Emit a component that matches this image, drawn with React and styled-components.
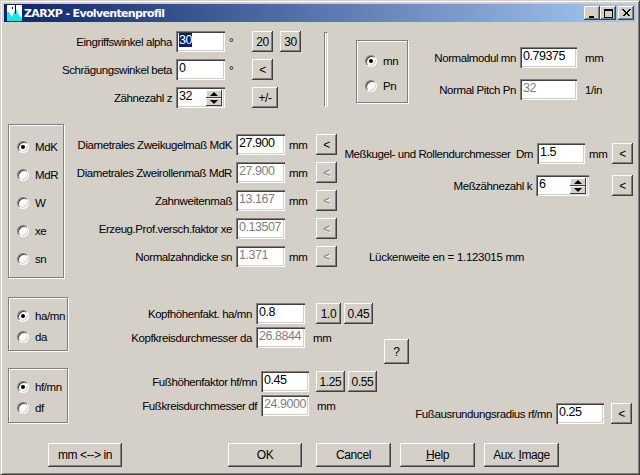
import styled, { createGlobalStyle } from "styled-components";

const GlobalStyle = createGlobalStyle`
  html, body {
    margin: 0;
    padding: 0;
    background: #d4d0c8;
  }
  body {
    font-family: "Liberation Sans", Arial, sans-serif;
    font-size: 11.5px;
    letter-spacing: -0.42px;
    color: #000;
  }
`;

const Frame = styled.div`
  box-sizing: border-box;
  width: 640px;
  height: 475px;
  padding: 3px;
  background: #d4d0c8;
  border: 1px solid;
  border-color: #d4d0c8 #404040 #404040 #d4d0c8;
  box-shadow: inset 1px 1px 0 #fff, inset -1px -1px 0 #808080;
  overflow: hidden;
`;

const TitleBar = styled.div`
  display: flex;
  align-items: center;
  height: 18px;
  padding: 0 2px;
  background: linear-gradient(to right, #0a246a, #a6caf0);
`;

const TitleText = styled.div`
  flex: 1;
  margin-left: 2px;
  color: #fff;
  font-family: "DejaVu Sans", sans-serif;
  font-size: 11px;
  font-weight: bold;
  letter-spacing: -0.65px;
  white-space: nowrap;
`;

const CaptionButton = styled.div`
  display: flex;
  align-items: center;
  justify-content: center;
  width: 16px;
  height: 14px;
  margin-left: ${(p) => p.$gap || 0}px;
  background: #d4d0c8;
  box-shadow: inset -1px -1px 0 #404040, inset 1px 1px 0 #fff, inset -2px -2px 0 #808080;
`;

const Client = styled.div`
  display: flex;
  flex-direction: column;
`;

const Section = styled.div`
  display: flex;
  margin-top: ${(p) => p.$top}px;
`;

const Rows = styled.div`
  display: flex;
  flex-direction: column;
  gap: ${(p) => p.$gap}px;
  width: ${(p) => (p.$width ? `${p.$width}px` : "auto")};
  margin-top: ${(p) => p.$top || 0}px;
`;

const Row = styled.div`
  display: flex;
  align-items: center;
  height: 21px;
`;

const Label = styled.div`
  flex: none;
  width: ${(p) => p.$width}px;
  margin-right: 4px;
  text-align: right;
  white-space: pre;
`;

const Unit = styled.div`
  flex: none;
  width: ${(p) => p.$width}px;
  padding-left: ${(p) => p.$left || 4}px;
  box-sizing: border-box;
  white-space: nowrap;
`;

const Field = styled.div`
  flex: none;
  box-sizing: border-box;
  position: relative;
  width: ${(p) => p.$width || 49}px;
  height: 21px;
  padding: 2px 3px;
  line-height: 15px;
  font-size: 12.5px;
  letter-spacing: -0.45px;
  background: #fff;
  color: ${(p) => (p.$off ? "#808080" : "#000")};
  box-shadow: inset 1px 1px 0 #808080, inset 2px 2px 0 #404040, inset -1px -1px 0 #fff, inset -2px -2px 0 #d4d0c8;
`;

const Selected = styled.span`
  background: #0a246a;
  color: #fff;
`;

const Spin = styled.div`
  position: absolute;
  top: 3px;
  right: 3px;
  display: flex;
  flex-direction: column;
  width: 16px;
  height: 16px;
`;

const SpinPart = styled.div`
  display: flex;
  align-items: center;
  justify-content: center;
  height: 8px;
  background: #d4d0c8;
  box-shadow: inset -1px -1px 0 #404040, inset 1px 1px 0 #fff;

  &::after {
    content: "";
    border-left: 4px solid transparent;
    border-right: 4px solid transparent;
    ${(p) => (p.$down ? "border-top: 4px solid #000;" : "border-bottom: 4px solid #000;")}
  }
`;

const Button = styled.div`
  flex: none;
  box-sizing: border-box;
  display: flex;
  align-items: center;
  justify-content: center;
  width: ${(p) => p.$width || 21}px;
  height: ${(p) => p.$height || 21}px;
  margin-left: ${(p) => p.$left || 0}px;
  margin-top: ${(p) => p.$top || 0}px;
  background: #d4d0c8;
  font-size: 12px;
  letter-spacing: -0.4px;
  color: ${(p) => (p.$off ? "#808080" : "#000")};
  text-shadow: ${(p) => (p.$off ? "1px 1px 0 #fff" : "none")};
  box-shadow: inset -1px -1px 0 #404040, inset 1px 1px 0 #fff, inset -2px -2px 0 #808080;
  white-space: pre;
`;

const Etched = styled.div`
  flex: none;
  box-sizing: border-box;
  width: 4px;
  height: 75px;
  margin-top: 1px;
  border: 1px solid #808080;
  border-right-color: #fff;
  border-bottom-color: #fff;
  box-shadow: inset 1px 0 0 #fff;
`;

const Group = styled.div`
  flex: none;
  box-sizing: border-box;
  display: flex;
  flex-direction: column;
  justify-content: center;
  gap: ${(p) => p.$gap}px;
  width: ${(p) => p.$width}px;
  height: ${(p) => p.$height}px;
  margin-left: ${(p) => p.$left || 4}px;
  margin-top: ${(p) => p.$top || 0}px;
  padding: 4px 0 0 8px;
  border: 1px solid #808080;
  box-shadow: 1px 1px 0 #fff, inset 1px 1px 0 #fff;
`;

const RadioRow = styled.div`
  display: flex;
  align-items: center;
  gap: 6px;
  height: 14px;
  white-space: nowrap;
`;

const Radio = styled.div`
  flex: none;
  box-sizing: border-box;
  display: flex;
  align-items: center;
  justify-content: center;
  width: 12px;
  height: 12px;
  border-radius: 50%;
  background: #fff;
  border: 1px solid;
  border-color: #808080 #fff #fff #808080;
  box-shadow: inset 1px 1px 0 #404040, inset -1px -1px 0 #d4d0c8;

  &::after {
    content: "";
    display: ${(p) => (p.$on ? "block" : "none")};
    width: 4px;
    height: 4px;
    border-radius: 50%;
    background: #000;
  }
`;

const Note = styled.div`
  margin-left: ${(p) => p.$left}px;
  margin-top: ${(p) => p.$top}px;
  letter-spacing: -0.3px;
`;

const Column = styled.div`
  display: flex;
  flex-direction: column;
  width: ${(p) => (p.$width ? `${p.$width}px` : "auto")};
`;

const Footer = styled.div`
  display: flex;
  margin-top: 19px;
`;

function AppIcon() {
  return (
    <svg width="16" height="16" viewBox="0 0 16 16" style={{ flex: "none" }}>
      <rect width="16" height="16" fill="#fff" />
      <path d="M0 16V10L2 6L4 9L6 12L8 7L10 4L12 9L14 11L16 13V16Z" fill="#19e6e6" />
      <rect x="0" y="0" width="1" height="16" fill="#0a246a" />
      <rect x="9" y="0" width="1" height="9" fill="#000" />
      <rect x="6" y="2" width="1" height="2" fill="#000" />
    </svg>
  );
}

const CaptionGlyph = ({ d, w = 1 }) => (
  <svg width="10" height="10" viewBox="0 0 10 10" shapeRendering="crispEdges">
    <path d={d} fill="none" stroke="#000" strokeWidth={w} />
  </svg>
);

const Spinner = ({ value, width }) => (
  <Field $width={width}>
    {value}
    <Spin>
      <SpinPart />
      <SpinPart $down />
    </Spin>
  </Field>
);

const RadioItem = ({ on, children }) => (
  <RadioRow>
    <Radio $on={on} />
    {children}
  </RadioRow>
);

const measures = [
  { label: "Diametrales Zweikugelmaß MdK", value: "27.900", unit: "mm" },
  { label: "Diametrales Zweirollenmaß MdR", value: "27.900", unit: "mm", off: true },
  { label: "Zahnweitenmaß", value: "13.167", unit: "mm", off: true },
  { label: "Erzeug.Prof.versch.faktor xe", value: "0.13507", unit: "", off: true },
  { label: "Normalzahndicke sn", value: "1.371", unit: "mm", off: true },
];

export default function App() {
  return (
    <>
      <GlobalStyle />
      <Frame>
        <TitleBar>
          <AppIcon />
          <TitleText>ZARXP - Evolventenprofil</TitleText>
          <CaptionButton>
            <CaptionGlyph d="M2 8.5H7M2 9.5H7" />
          </CaptionButton>
          <CaptionButton>
            <CaptionGlyph d="M1.5 1.5H9.5V9.5H1.5ZM1 2.5H9" />
          </CaptionButton>
          <CaptionButton $gap={2}>
            <CaptionGlyph d="M1.5 1.5L8.5 8.5M2.5 1.5L9.5 8.5M8.5 1.5L1.5 8.5M9.5 1.5L2.5 8.5" w={1} />
          </CaptionButton>
        </TitleBar>
        <Client>
          <Section $top={9}>
            <Rows $gap={7} $width={320}>
              <Row>
                <Label $width={168}>Eingriffswinkel alpha</Label>
                <Field><Selected>30</Selected></Field>
                <Unit $width={27}>°</Unit>
                <Button>20</Button>
                <Button $left={7}>30</Button>
              </Row>
              <Row>
                <Label $width={168}>Schrägungswinkel beta</Label>
                <Field>0</Field>
                <Unit $width={27}>°</Unit>
                <Button>&lt;</Button>
              </Row>
              <Row>
                <Label $width={168}>Zähnezahl z</Label>
                <Spinner value="32" />
                <Unit $width={27} />
                <Button $width={26}>+/-</Button>
              </Row>
            </Rows>
            <Etched />
            <Group $left={28} $top={9} $width={52} $height={63} $gap={11}>
              <RadioItem on>mn</RadioItem>
              <RadioItem>Pn</RadioItem>
            </Group>
            <Rows $gap={11} $top={16}>
              <Row>
                <Label $width={108}>Normalmodul mn</Label>
                <Field $width={57}>0.79375</Field>
                <Unit $width={40} $left={8}>mm</Unit>
              </Row>
              <Row>
                <Label $width={108}>Normal Pitch Pn</Label>
                <Field $width={57} $off>32</Field>
                <Unit $width={40} $left={8}>1/in</Unit>
              </Row>
            </Rows>
          </Section>

          <Section $top={16}>
            <Group $width={56} $height={154} $gap={14}>
              <RadioItem on>MdK</RadioItem>
              <RadioItem>MdR</RadioItem>
              <RadioItem>W</RadioItem>
              <RadioItem>xe</RadioItem>
              <RadioItem>sn</RadioItem>
            </Group>
            <Rows $gap={7} $top={10}>
              {measures.map((m) => (
                <Row key={m.label}>
                  <Label $width={168}>{m.label}</Label>
                  <Field $off={m.off}>{m.value}</Field>
                  <Unit $width={31}>{m.unit}</Unit>
                  <Button $off={m.off}>&lt;</Button>
                </Row>
              ))}
            </Rows>
            <Column>
              <Rows $gap={11} $top={19}>
                <Row>
                  <Label $width={196}>{"Meßkugel- und Rollendurchmesser  Dm"}</Label>
                  <Field $width={48}>1.5</Field>
                  <Unit $width={27}>mm</Unit>
                  <Button>&lt;</Button>
                </Row>
                <Row>
                  <Label $width={195}>Meßzähnezahl k</Label>
                  <Spinner value="6" width={53} />
                  <Unit $width={23} />
                  <Button>&lt;</Button>
                </Row>
              </Rows>
              <Note $left={32} $top={55}>Lückenweite en = 1.123015 mm</Note>
            </Column>
          </Section>

          <Section $top={19}>
            <Column $width={380}>
              <Section $top={0}>
                <Group $width={60} $height={54} $gap={7}>
                  <RadioItem on>ha/mn</RadioItem>
                  <RadioItem>da</RadioItem>
                </Group>
                <Rows $gap={3} $top={6}>
                  <Row>
                    <Label $width={184}>Kopfhöhenfakt. ha/mn</Label>
                    <Field>0.8</Field>
                    <Button $left={11} $width={25}>1.0</Button>
                    <Button $left={3} $width={29}>0.45</Button>
                  </Row>
                  <Row>
                    <Label $width={184}>Kopfkreisdurchmesser da</Label>
                    <Field $off>26.8844</Field>
                    <Unit $width={30} $left={8}>mm</Unit>
                  </Row>
                </Rows>
              </Section>
              <Section $top={17}>
                <Group $width={60} $height={55} $gap={7}>
                  <RadioItem on>hf/mn</RadioItem>
                  <RadioItem>df</RadioItem>
                </Group>
                <Rows $gap={3} $top={3}>
                  <Row>
                    <Label $width={189}>Fußhöhenfaktor hf/mn</Label>
                    <Field $width={48}>0.45</Field>
                    <Button $left={7} $width={29}>1.25</Button>
                    <Button $left={3} $width={29}>0.55</Button>
                  </Row>
                  <Row>
                    <Label $width={189}>Fußkreisdurchmesser df</Label>
                    <Field $width={48} $off>24.9000</Field>
                    <Unit $width={30} $left={8}>mm</Unit>
                  </Row>
                </Rows>
              </Section>
            </Column>
            <Column>
              <Button $width={25} $height={25} $top={42}>?</Button>
              <Rows $gap={0} $top={39}>
                <Row>
                  <Label $width={168}>Fußausrundungsradius rf/mn</Label>
                  <Field $width={48}>0.25</Field>
                  <Button $left={7}>&lt;</Button>
                </Row>
              </Rows>
            </Column>
          </Section>

          <Footer>
            <Button $left={44} $width={74} $height={24}>mm &lt;--&gt; in</Button>
            <Button $left={106} $width={74} $height={24}>OK</Button>
            <Button $left={14} $width={75} $height={24}>Cancel</Button>
            <Button $left={9} $width={75} $height={24}><u>H</u>elp</Button>
            <Button $left={9} $width={75} $height={24}>Aux. <u>I</u>mage</Button>
          </Footer>
        </Client>
      </Frame>
    </>
  );
}
